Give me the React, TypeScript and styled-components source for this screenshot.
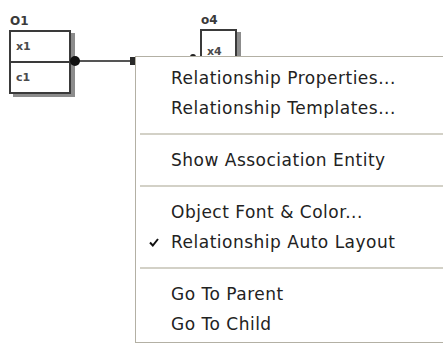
import React from "react";
import styled, { createGlobalStyle } from "styled-components";

const GlobalStyle = createGlobalStyle`
  html, body {
    margin: 0;
    padding: 0;
    background: #ffffff;
    overflow: hidden;
  }
`;

const Canvas = styled.div`
  position: relative;
  width: 443px;
  height: 345px;
  background: #ffffff;
  font-family: Tahoma, "DejaVu Sans", sans-serif;
  overflow: hidden;
`;

const Node = styled.div<{ $x: number; $y: number }>`
  position: absolute;
  left: ${(p) => p.$x}px;
  top: ${(p) => p.$y}px;
`;

const NodeName = styled.div`
  font-family: "DejaVu Sans", sans-serif;
  font-size: 12px;
  font-weight: bold;
  color: #3a3a3a;
  line-height: 12px;
  margin: 0 0 3px 1px;
`;

const EntityBox = styled.div<{ $w: number }>`
  width: ${(p) => p.$w}px;
  border: 2px solid #3a3a3a;
  background: #ffffff;
  box-shadow: 4px 3px 0 #8c8c8c;
  display: flex;
  flex-direction: column;
`;

const EntityRow = styled.div<{ $h: number }>`
  height: ${(p) => p.$h}px;
  display: flex;
  align-items: center;
  padding-left: 5px;
  font-family: "DejaVu Sans", sans-serif;
  font-size: 11px;
  font-weight: bold;
  color: #4a4a4a;
  & + & {
    border-top: 2px solid #3a3a3a;
  }
`;

const Wires = styled.svg`
  position: absolute;
  left: 0;
  top: 0;
`;

const Menu = styled.div`
  position: absolute;
  left: 135px;
  top: 56px;
  width: 330px;
  background: #ffffff;
  border: 1px solid #b3b0a4;
  padding: 6px 0 3px;
  display: flex;
  flex-direction: column;
`;

const Item = styled.div`
  position: relative;
  height: 30px;
  display: flex;
  align-items: center;
  padding-left: 35px;
  font-size: 17px;
  letter-spacing: 0.5px;
  color: #222222;
  white-space: nowrap;
`;

const Check = styled.svg`
  position: absolute;
  left: 13px;
  top: 11px;
`;

const Separator = styled.div`
  height: 22px;
  display: flex;
  align-items: center;
  padding-left: 4px;
  &::after {
    content: "";
    flex: 1;
    height: 2px;
    background: #d3d1c7;
  }
`;

const groups: { label: string; checked?: boolean }[][] = [
  [{ label: "Relationship Properties..." }, { label: "Relationship Templates..." }],
  [{ label: "Show Association Entity" }],
  [{ label: "Object Font & Color..." }, { label: "Relationship Auto Layout", checked: true }],
  [{ label: "Go To Parent" }, { label: "Go To Child" }],
];

export default function App() {
  return (
    <>
      <GlobalStyle />
      <Canvas>
        <Node $x={9} $y={15}>
          <NodeName>O1</NodeName>
          <EntityBox $w={58}>
            <EntityRow $h={29}>x1</EntityRow>
            <EntityRow $h={29}>c1</EntityRow>
          </EntityBox>
        </Node>
        <Node $x={200} $y={14}>
          <NodeName>o4</NodeName>
          <EntityBox $w={33}>
            <EntityRow $h={40}>x4</EntityRow>
          </EntityBox>
        </Node>
        <Wires width="443" height="345">
          <line x1="75" y1="61" x2="131" y2="61" stroke="#555555" strokeWidth="2" />
          <circle cx="75" cy="61" r="5" fill="#111111" />
          <rect x="130" y="57" width="7" height="8" fill="#2a2a2a" />
          <path d="M190 57 A3 3 0 0 1 196 57 Z" fill="#222222" />
        </Wires>
        <Menu>
          {groups.map((group, gi) => (
            <React.Fragment key={gi}>
              {gi > 0 && <Separator />}
              {group.map((item) => (
                <Item key={item.label}>
                  {item.checked && (
                    <Check width="10" height="9" viewBox="0 0 10 9">
                      <path d="M1 4.5 L3.8 7.5 L9 1" fill="none" stroke="#111" strokeWidth="2" />
                    </Check>
                  )}
                  {item.label}
                </Item>
              ))}
            </React.Fragment>
          ))}
        </Menu>
      </Canvas>
    </>
  );
}
